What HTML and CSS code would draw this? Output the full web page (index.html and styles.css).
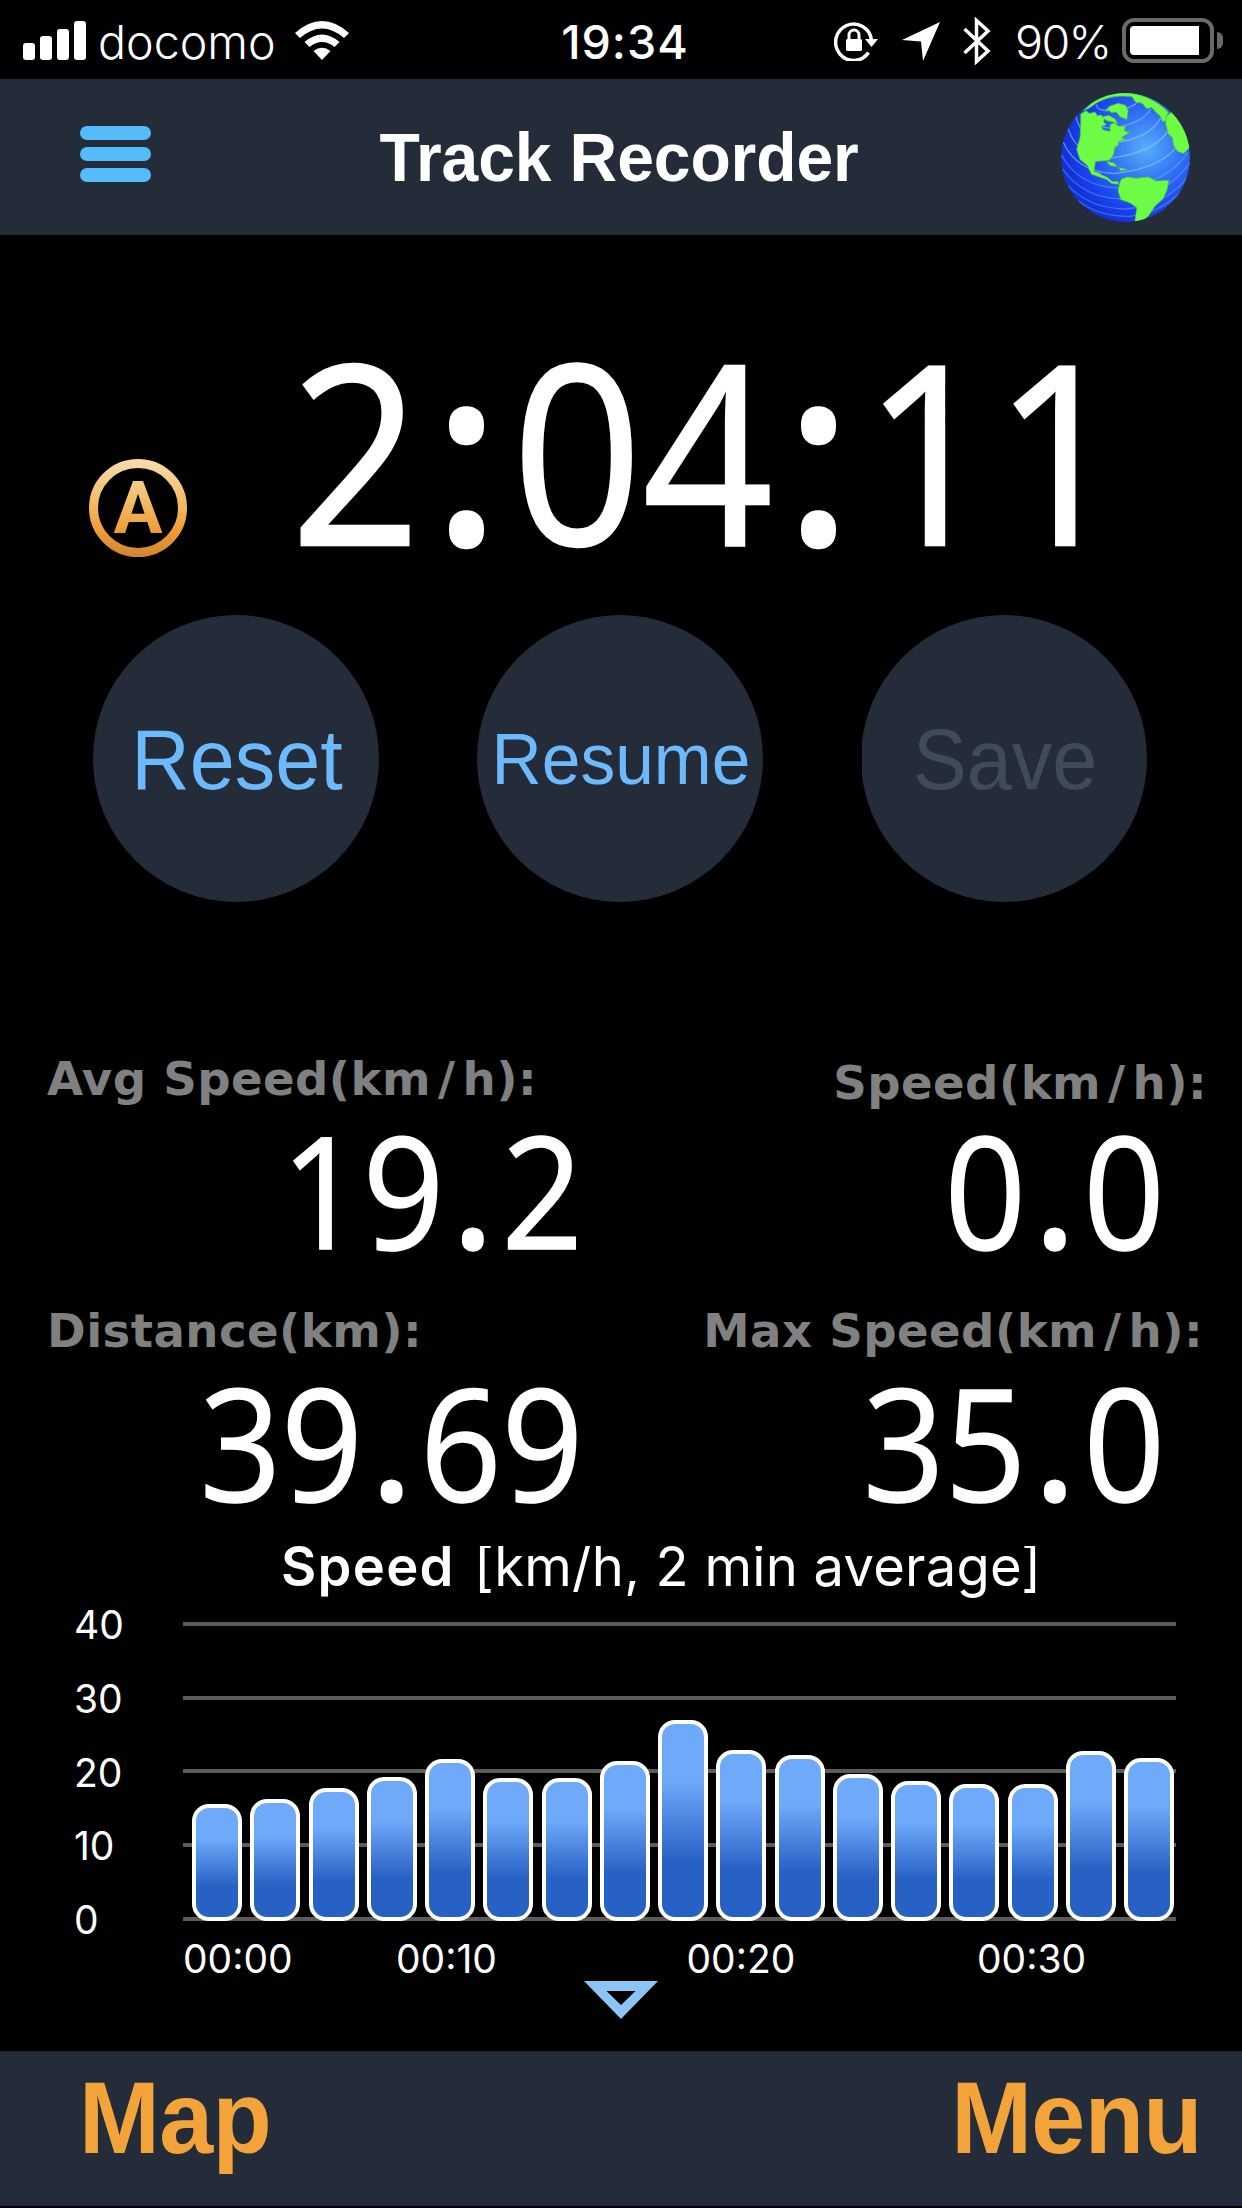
FILE: index.html
```html
<!DOCTYPE html>
<html lang="en">
<head>
    <meta charset="UTF-8">
    <meta name="viewport" content="width=device-width, initial-scale=1.0">
    <title>Track Recorder</title>
    <link rel="stylesheet" href="styles.css">
</head>
<body>
    <div class="status-bar">
        <div class="status-left">
            <svg class="signal" viewBox="0 0 63 39">
                <rect x="0" y="22" width="12" height="17" rx="3"/>
                <rect x="17" y="15" width="12" height="24" rx="3"/>
                <rect x="34" y="8" width="12" height="31" rx="3"/>
                <rect x="51" y="0" width="12" height="39" rx="3"/>
            </svg>
            <span class="carrier">docomo</span>
            <svg class="wifi" viewBox="0 0 54 39">
                <path d="M0 12 Q27 -12 54 12 L49 17 Q27 -2 5 17 Z"/>
                <path d="M9.500 21 Q27 6 44.500 21 L39.500 26 Q27 16 14.500 26 Z"/>
                <path d="M18.500 30 Q27 23.500 35.500 30 L27 39 Z"/>
            </svg>
        </div>
        <div class="time">19:34</div>
        <div class="status-right">
            <svg class="rotation-lock" viewBox="0 0 44 40">
                <path class="line" d="M34.500 31.500 A18 18.200 0 1 1 37.500 19"/>
                <path d="M31 18 H44 L37.500 26 Z"/>
                <rect x="12" y="18" width="16" height="12" rx="1.500"/>
                <path class="line thin" d="M15 18 V14 A5 5 0 0 1 25 14 V18"/>
            </svg>
            <svg class="location" viewBox="0 0 38 39">
                <path d="M38 0 L21 39 L19 19.500 L0 18 Z"/>
            </svg>
            <svg class="bluetooth" viewBox="0 0 28 48">
                <path class="line" d="M1.500 12 L25 34 L13.500 44.500 V3.500 L25 14 L1.500 36"/>
            </svg>
            <span class="percent">90%</span>
            <div class="battery"><div class="battery-level"></div></div>
            <div class="battery-tip"></div>
        </div>
    </div>

    <div class="header">
        <div class="hamburger">
            <span></span>
            <span></span>
            <span></span>
        </div>
        <div class="title">Track Recorder</div>
        <svg class="globe" viewBox="33 27 386 386">
            <defs>
                <radialGradient id="ocean" cx="0.66" cy="0.43" r="0.62">
                    <stop offset="0" stop-color="#5aaef8"/>
                    <stop offset="0.45" stop-color="#2f70f4"/>
                    <stop offset="0.8" stop-color="#1a41ee"/>
                    <stop offset="1" stop-color="#1232d8"/>
                </radialGradient>
                <clipPath id="ball"><circle cx="226" cy="220" r="193"/></clipPath>
            </defs>
            <g clip-path="url(#ball)">
                <circle cx="226" cy="220" r="193" fill="url(#ocean)"/>
                <g class="parallels">
                    <path d="M140 62 Q138 78 170 80 Q235 80 262 55"/>
                    <path d="M110 85 Q110 125 180 132 Q275 122 302 75"/>
                    <path d="M78 98 Q90 165 180 178 Q300 165 332 100"/>
                    <path d="M55 135 Q80 215 180 222 Q320 205 360 130"/>
                    <path d="M40 175 Q80 262 190 268 Q335 255 390 175"/>
                    <path class="dim" d="M34 212 Q85 305 200 311 Q350 300 412 205"/>
                    <path class="dim" d="M38 255 Q100 342 215 344 Q350 335 418 235"/>
                    <path class="dim" d="M55 305 Q120 374 230 374 Q345 362 410 280"/>
                    <path class="dim" d="M85 350 Q150 398 240 396 Q330 385 390 325"/>
                </g>
                <g class="land">
                    <path d="M92 90 L108 80 L118 88 L135 84 L142 96 L152 92 L164 104 L160 112 L168 122 L153 128 L160 138 L180 142 L180 122 L192 116 L204 126 L226 127 L222 140 L238 145 L214 160 L226 166 L206 172 L204 184 L194 190 L190 212 L178 228 L136 232 L132 262 L146 266 L158 274 L170 278 L186 292 L204 292 L204 300 L184 298 L170 286 L148 278 L124 270 L112 244 L90 226 L80 196 L90 160 L92 120 Z"/>
                    <path d="M166 78 L180 66 L204 58 L226 64 L234 80 L230 106 L210 98 L198 84 L184 86 L176 78 Z"/>
                    <path d="M156 98 L176 94 L194 104 L204 120 L190 114 L170 110 Z"/>
                    <path d="M100 80 Q145 30 215 25 Q300 28 355 85 L348 96 L348 110 L336 112 L332 98 L316 84 L304 70 L290 74 L276 58 L256 54 L245 38 Q170 28 118 72 Z"/>
                    <path d="M348 96 L368 82 Q430 140 418 190 L400 208 L382 202 L370 184 L366 160 L354 150 L346 118 Z"/>
                    <path d="M170 232 L190 236 L202 248 L180 244 Z"/>
                    <path d="M206 250 L232 256 L212 260 Z"/>
                    <path d="M208 298 L214 284 L232 278 L258 282 L294 278 L318 290 L356 288 L350 318 L338 344 L314 366 L294 396 L270 414 L254 412 L260 370 L240 356 L212 346 L204 320 Z"/>
                </g>
            </g>
        </svg>
    </div>

    <div class="timer">
        <svg class="auto-icon" viewBox="0 0 98 98">
            <defs>
                <linearGradient id="gold" gradientUnits="userSpaceOnUse" x1="0" y1="0" x2="0" y2="98">
                    <stop offset="0" stop-color="#f8dcae"/>
                    <stop offset="0.4" stop-color="#f3bf6c"/>
                    <stop offset="0.75" stop-color="#ef9b35"/>
                    <stop offset="1" stop-color="#cf8430"/>
                </linearGradient>
            </defs>
            <circle cx="49" cy="49" r="44.500" fill="none" stroke="url(#gold)" stroke-width="9"/>
            <text x="49" y="74" fill="url(#gold)">A</text>
        </svg>
        <div class="digits elapsed">2<i>:</i>04<i>:</i>11</div>
    </div>

    <div class="buttons">
        <div class="round-button"><span>Reset</span></div>
        <div class="round-button small"><span>Resume</span></div>
        <div class="round-button disabled"><span>Save</span></div>
    </div>

    <div class="stats">
        <div class="stat">
            <div class="label">Avg Speed(km<i>/</i>h):</div>
            <div class="digits value">19<i>.</i>2</div>
        </div>
        <div class="stat right">
            <div class="label lower">Speed(km<i>/</i>h):</div>
            <div class="digits value">0<i>.</i>0</div>
        </div>
        <div class="stat">
            <div class="label">Distance(km):</div>
            <div class="digits value">39<i>.</i>69</div>
        </div>
        <div class="stat right">
            <div class="label">Max Speed(km<i>/</i>h):</div>
            <div class="digits value">35<i>.</i>0</div>
        </div>
    </div>

    <div class="chart">
        <div class="chart-title"><b>Speed</b> <span>[km/h, 2 min average]</span></div>
        <div class="chart-body">
            <div class="y-axis">
                <span>40</span>
                <span>30</span>
                <span>20</span>
                <span>10</span>
                <span>0</span>
            </div>
            <div class="plot">
                <div class="bar" style="height: 117px"></div>
                <div class="bar" style="height: 122px"></div>
                <div class="bar" style="height: 133px"></div>
                <div class="bar" style="height: 144px"></div>
                <div class="bar" style="height: 162px"></div>
                <div class="bar" style="height: 143px"></div>
                <div class="bar" style="height: 143px"></div>
                <div class="bar" style="height: 160px"></div>
                <div class="bar" style="height: 201px"></div>
                <div class="bar" style="height: 171px"></div>
                <div class="bar" style="height: 166px"></div>
                <div class="bar" style="height: 147px"></div>
                <div class="bar" style="height: 140px"></div>
                <div class="bar" style="height: 137px"></div>
                <div class="bar" style="height: 137px"></div>
                <div class="bar" style="height: 170px"></div>
                <div class="bar" style="height: 163px"></div>
            </div>
        </div>
        <div class="x-axis">
            <span>00:00</span>
            <span>00:10</span>
            <span>00:20</span>
            <span>00:30</span>
        </div>
        <svg class="arrow" viewBox="0 0 74 38">
            <path fill-rule="evenodd" d="M0 0 H74 L37 38 Z M22.500 10 L37 24 L51.500 10 Z"/>
        </svg>
    </div>

    <div class="footer">
        <span>Map</span>
        <span>Menu</span>
    </div>
</body>
</html>
```

FILE: styles.css
```css
* {
    box-sizing: border-box;
}
body {
    margin: 0;
    width: 1242px;
    height: 2208px;
    overflow: hidden;
    background-color: black;
    color: white;
    font-family: "Liberation Sans", Arial, sans-serif;
}
svg {
    display: block;
    flex: none;
}

/* status bar */
.status-bar {
    display: grid;
    grid-template-columns: 1fr auto 1fr;
    height: 79px;
    padding: 0 19px 0 23px;
    font-family: Inter, sans-serif;
    font-size: 46.6px;
    line-height: 84px;
    fill: white;
}
.status-left, .status-right {
    display: flex;
}
.status-right {
    justify-content: flex-end;
}
.signal {
    width: 63px;
    height: 39px;
    margin-top: 21px;
}
.carrier {
    width: 175px;
    margin-left: 12px;
    font-weight: 300;
}
.wifi {
    width: 54px;
    height: 39px;
    margin: 21px 0 0 22px;
}
.time {
    padding-left: 4px;
    font-weight: 500;
    letter-spacing: 1px;
}
.line {
    fill: none;
    stroke: white;
    stroke-width: 3.5;
}
.thin {
    stroke-width: 3;
}
.rotation-lock {
    width: 44px;
    height: 40px;
    margin: 21px 24px 0 0;
}
.location {
    width: 38px;
    height: 39px;
    margin: 22px 23px 0 0;
}
.bluetooth {
    width: 28px;
    height: 48px;
    margin: 17px 24px 0 0;
}
.percent {
    width: 107px;
    font-weight: 300;
    letter-spacing: -1.6px;
}
.battery {
    width: 92px;
    height: 45px;
    margin-top: 18px;
    padding: 4px;
    border: 4px solid #6a6a6a;
    border-radius: 12px;
}
.battery-level {
    width: 69px;
    height: 29px;
    border-radius: 4px 0 0 4px;
    background-color: white;
}
.battery-tip {
    width: 6px;
    height: 17px;
    margin: 32px 0 0 3px;
    border-radius: 0 6px 6px 0;
    background-color: #6a6a6a;
}

/* header */
.header {
    display: grid;
    grid-template-columns: 71px 1fr 129px;
    align-items: center;
    height: 156px;
    padding: 0 52px 0 80px;
    background-color: #252c39;
}
.hamburger {
    display: flex;
    flex-direction: column;
    gap: 7px;
    margin-top: -6px;
}
.hamburger span {
    height: 14px;
    border-radius: 7px;
    background-color: #54bbfd;
}
.title {
    padding-left: 26px;
    font-size: 66px;
    font-weight: bold;
    text-align: center;
    letter-spacing: -0.1px;
    transform: scaleY(1.045);
}
.globe {
    width: 129px;
    height: 129px;
}
.parallels path {
    fill: none;
    stroke: #8fc9ff;
    stroke-width: 4;
    opacity: 0.6;
}
.parallels .dim {
    opacity: 0.35;
}
.land {
    fill: #6dfb46;
    stroke: #49c93c;
    stroke-width: 2;
}

/* big numbers */
.digits {
    font-family: "Open Sans", "Noto Sans", sans-serif;
    line-height: 1;
    white-space: nowrap;
    transform: scaleX(0.915);
    transform-origin: right;
}
.digits i {
    display: inline-block;
    width: 0.401em;
    font-style: normal;
    font-weight: 600;
    text-align: center;
}
.timer {
    display: flex;
    justify-content: space-between;
    height: 380px;
    padding: 0 117px 0 89px;
}
.auto-icon {
    width: 98px;
    height: 98px;
    margin-top: 224px;
}
.auto-icon text {
    font-family: Roboto, sans-serif;
    font-size: 73px;
    font-weight: 700;
    text-anchor: middle;
}
.elapsed {
    margin-top: 89px;
    font-size: 249px;
    -webkit-text-stroke: 2.5px white;
}

/* buttons */
.buttons {
    display: flex;
    justify-content: space-between;
    height: 287px;
    padding: 0 95px 0 93px;
}
.round-button {
    display: flex;
    align-items: center;
    justify-content: center;
    width: 286px;
    height: 287px;
    padding: 4px 0 0 2px;
    border-radius: 50%;
    background-color: #252c39;
    color: #6cb9fc;
    font-size: 81px;
}
.round-button span {
    transform: scaleY(1.045);
}
.small {
    padding-top: 1px;
    font-size: 69.5px;
}
.disabled {
    color: #404b58;
    clip-path: inset(0 0 0 1px);
}

/* stats */
.stats {
    display: grid;
    grid-template-columns: 583px 582px;
    grid-auto-rows: 252px;
    height: 644px;
    padding-top: 150px;
}
.stat {
    display: flex;
    flex-direction: column;
    align-items: flex-end;
}
.label {
    align-self: flex-start;
    height: 59px;
    margin-left: 47px;
    color: #808080;
    font-family: "DejaVu Sans", Verdana, sans-serif;
    font-size: 46.6px;
    font-weight: bold;
    line-height: 54px;
    letter-spacing: 0.45px;
    white-space: nowrap;
}
.label i {
    padding: 0 7px;
    font-style: normal;
}
.right .label {
    align-self: flex-end;
    margin-right: -38px;
}
.right .lower {
    padding-top: 4px;
    margin-right: -42px;
}
.value {
    font-size: 156px;
    -webkit-text-stroke: 1.5px white;
}

/* speed chart */
.chart {
    height: 505px;
    font-family: Inter, sans-serif;
}
.chart-title {
    height: 76px;
    padding-left: 281px;
    overflow: hidden;
    font-size: 54.3px;
    line-height: 40px;
    white-space: nowrap;
}
.chart-title b {
    font-weight: 600;
    letter-spacing: 1.3px;
}
.chart-title span {
    margin-left: 4px;
    letter-spacing: 0.25px;
}
.chart-body {
    display: flex;
    height: 299px;
}
.y-axis {
    display: flex;
    flex-direction: column;
    width: 183px;
    padding-left: 74px;
    font-size: 39px;
    line-height: 6px;
}
.y-axis span {
    height: 73.75px;
    flex: none;
}
.plot {
    display: flex;
    align-items: flex-end;
    justify-content: space-between;
    width: 993px;
    padding: 0 2px 0 9px;
    background: repeating-linear-gradient(#5b5b5b 0 4px, transparent 4px 73.75px);
}
.bar {
    width: 50px;
    border: 4px solid white;
    border-radius: 17px;
    background: linear-gradient(#6fa9fa 30%, #2861c4 70%) border-box;
}
.x-axis {
    display: flex;
    padding-left: 183px;
    font-size: 39px;
    line-height: 75px;
    height: 60px;
}
.x-axis span {
    flex: none;
    width: 290.500px;
}
.x-axis span:first-child {
    width: 213px;
}
.x-axis span:last-child {
    width: auto;
}
.arrow {
    width: 74px;
    height: 38px;
    margin-left: 584px;
    fill: #8cc4f6;
}

/* footer */
.footer {
    display: flex;
    justify-content: space-between;
    height: 155px;
    padding: 0 40px 0 79px;
    background-color: #252c39;
    color: #f2a43a;
    font-size: 97px;
    font-weight: bold;
    line-height: 136px;
    letter-spacing: -0.6px;
}
.footer span {
    transform: scaleY(1.045);
}
```
